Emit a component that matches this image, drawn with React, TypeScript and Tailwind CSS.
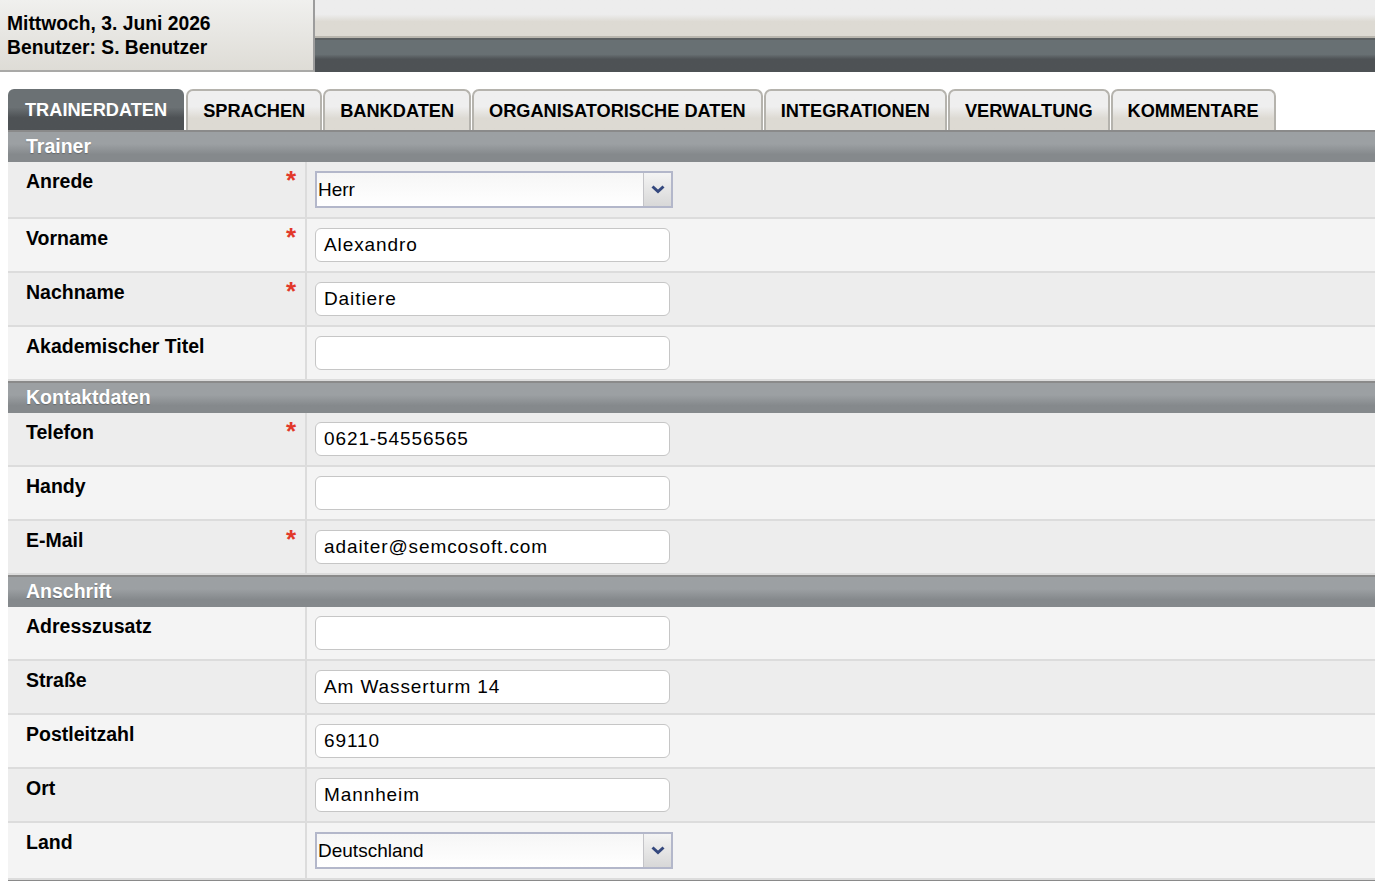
import { Fragment } from "react";

type Field = {
  label: string;
  value?: string;
  required?: boolean;
  select?: boolean;
};

type Section = {
  title: string;
  fields: Field[];
};

const sections: Section[] = [
  {
    title: "Trainer",
    fields: [
      { label: "Anrede", value: "Herr", required: true, select: true },
      { label: "Vorname", value: "Alexandro", required: true },
      { label: "Nachname", value: "Daitiere", required: true },
      { label: "Akademischer Titel", value: "" },
    ],
  },
  {
    title: "Kontaktdaten",
    fields: [
      { label: "Telefon", value: "0621-54556565", required: true },
      { label: "Handy", value: "" },
      { label: "E-Mail", value: "adaiter@semcosoft.com", required: true },
    ],
  },
  {
    title: "Anschrift",
    fields: [
      { label: "Adresszusatz", value: "" },
      { label: "Straße", value: "Am Wasserturm 14" },
      { label: "Postleitzahl", value: "69110" },
      { label: "Ort", value: "Mannheim" },
      { label: "Land", value: "Deutschland", select: true },
    ],
  },
];

const tabs = [
  "Trainerdaten",
  "Sprachen",
  "Bankdaten",
  "Organisatorische Daten",
  "Integrationen",
  "Verwaltung",
  "Kommentare",
];

function SelectBox({ value }: { value: string }) {
  return (
    <div className="flex h-[37px] w-[358px] border-2 border-[#b3b7ca] bg-white">
      <div className="flex flex-1 items-center bg-gradient-to-b from-[#f6f6f6] to-white pt-[1px] pl-[1px] text-[19px] text-black">
        {value}
      </div>
      <div className="flex w-[28px] items-center justify-center border-l border-[#c4c4c8] bg-gradient-to-b from-[#f4f4f4] to-[#d8d8d8]">
        <svg width="14" height="9" viewBox="0 0 14 9" aria-hidden="true">
          <path d="M1.5 1.5 L7 6.5 L12.5 1.5" fill="none" stroke="#34487e" strokeWidth="3" />
        </svg>
      </div>
    </div>
  );
}

function TextBox({ value }: { value: string }) {
  return (
    <div className="flex h-[34px] w-[355px] items-center rounded-[6px] border border-[#c6c6c6] bg-white px-[8px] pt-[1px] text-[19px] tracking-[0.9px] text-black">
      {value}
    </div>
  );
}

export default function App() {
  let rowIndex = 0;

  return (
    <div className="min-h-[881px] overflow-hidden bg-white font-['Liberation_Sans',Arial,sans-serif] text-black">
      <header className="flex h-[72px]">
        <div className="w-[315px] shrink-0 border-r-2 border-b-2 border-r-[#9c9c9c] border-b-[#a9a9a7] bg-gradient-to-b from-[#f0f0ee] to-[#dedcd6] px-[7px] pt-[12px] text-[19.3px] leading-[24px] font-bold">
          <div>Mittwoch, 3. Juni 2026</div>
          <div>Benutzer: S. Benutzer</div>
        </div>
        <div className="flex flex-1 flex-col">
          <div className="h-[38px] border-b-2 border-[#b9b6ae] bg-gradient-to-b from-[#ededed] from-40% to-[#dddad3] to-60%"></div>
          <div className="flex-1 border-t-2 border-[#5c6062] bg-gradient-to-b from-[#687073] from-45% to-[#4e5255] to-60%"></div>
        </div>
      </header>

      <nav className="mt-[17px] flex gap-[1px] pl-[8px]">
        {tabs.map((tab, i) =>
          i === 0 ? (
            <div
              key={tab}
              className="mr-[1px] flex h-[41px] items-center rounded-t-[6px] bg-gradient-to-b from-[#6b7174] from-45% to-[#4e5255] to-70% px-[17px] pt-[2px] text-[18.2px] font-bold text-white uppercase"
            >
              {tab}
            </div>
          ) : (
            <div
              key={tab}
              className="flex h-[41px] items-center rounded-t-[7px] border-2 border-b-0 border-[#b5b3ad] bg-gradient-to-b from-[#efefef] from-40% to-[#dddad3] to-70% px-[15px] pt-[2px] text-[18.2px] font-bold text-black uppercase"
            >
              {tab}
            </div>
          ),
        )}
      </nav>

      <main className="ml-[8px]">
        {sections.map((section) => (
          <Fragment key={section.title}>
            <div className="flex h-[32px] items-center border-t-2 border-[#8a8a8a] bg-gradient-to-b from-[#9ca0a3] from-40% to-[#85898c] to-75% pl-[18px] text-[19.5px] font-bold text-white [text-shadow:0_1px_1px_rgba(0,0,0,0.25)]">
              {section.title}
            </div>
            {section.fields.map((field) => {
              const dark = rowIndex++ % 2 === 0;
              return (
                <div
                  key={field.label}
                  className={`flex border-b-2 border-[#dcdcdc] ${dark ? "bg-[#ededed]" : "bg-[#f4f4f4]"}`}
                >
                  <div className="flex w-[297px] shrink-0 items-start justify-between pt-[8px] pr-[9px] pl-[18px] text-[19.5px] leading-[22px] font-bold">
                    <span>{field.label}</span>
                    {field.required && (
                      <span className="mt-[-1px] text-[26px] leading-[22px] font-bold text-[#e2382a]">*</span>
                    )}
                  </div>
                  <div className="flex-1 border-l-2 border-[#dcdcdc] pt-[9px] pb-[9px] pl-[8px]">
                    {field.select ? (
                      <SelectBox value={field.value ?? ""} />
                    ) : (
                      <TextBox value={field.value ?? ""} />
                    )}
                  </div>
                </div>
              );
            })}
          </Fragment>
        ))}
        <div className="h-[32px] border-t-2 border-[#8a8a8a] bg-gradient-to-b from-[#9ca0a3] from-40% to-[#85898c] to-75%"></div>
      </main>
    </div>
  );
}
